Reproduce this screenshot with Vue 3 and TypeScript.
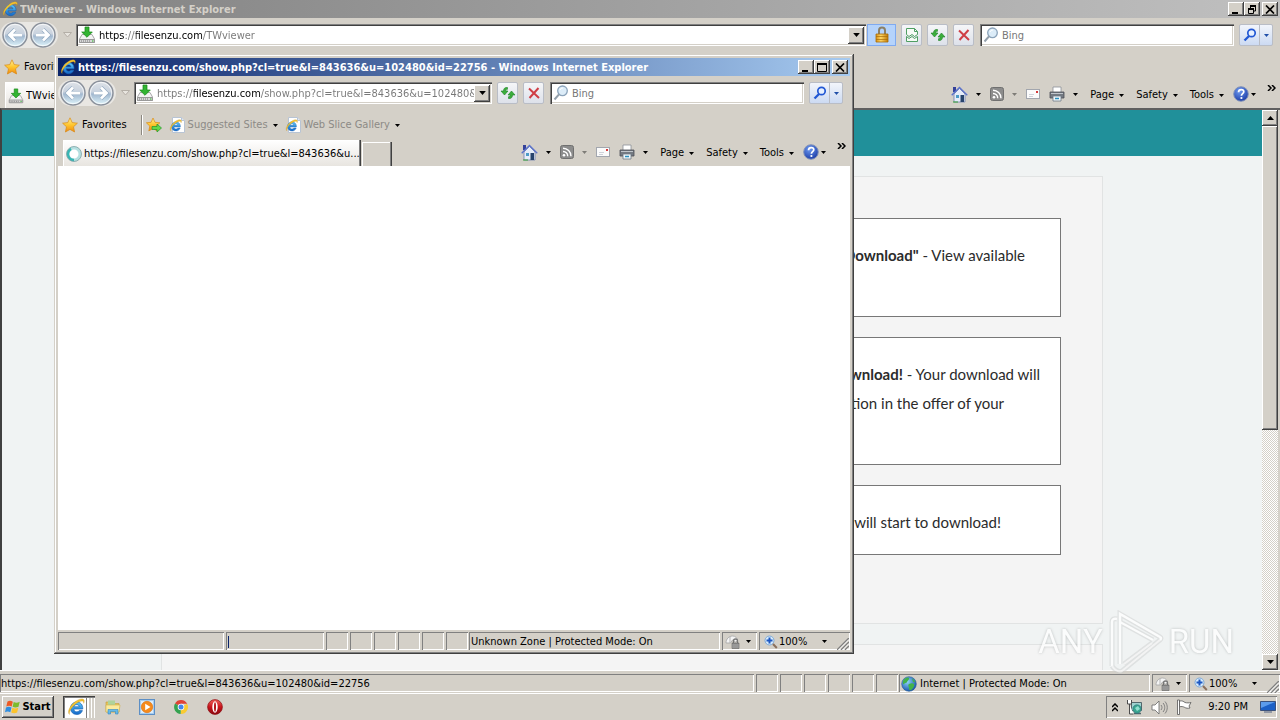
<script setup lang="ts">
interface Tool { icon?: string; label?: string; name: string; arrow?: boolean; dim?: boolean }
interface BrowserWindow {
  id: string
  title: string
  url: string
  tab: string
  zone: string
  known: boolean
  favorites: string[]
  inks: [string, number][]
}

const windows: BrowserWindow[] = [
  {
    id: 'main',
    title: 'TWviewer - Windows Internet Explorer',
    url: 'https://filesenzu.com/TWviewer',
    tab: 'TWviewer',
    zone: 'Internet | Protected Mode: On',
    known: true,
    favorites: [],
    inks: [['#000', 26], ['#777', 37], ['#000', 103], ['#777', 1200]],
  },
  {
    id: 'popup',
    title: 'https://filesenzu.com/show.php?cl=true&l=843636&u=102480&id=22756 - Windows Internet Explorer',
    url: 'https://filesenzu.com/show.php?cl=true&l=843636&u=102480&id=22756',
    tab: 'https://filesenzu.com/show.php?cl=true&l=843636&u...',
    zone: 'Unknown Zone | Protected Mode: On',
    known: false,
    favorites: ['Suggested Sites', 'Web Slice Gallery'],
    inks: [['#777', 37], ['#000', 103], ['#777', 1200]],
  },
]

const tools: Tool[] = [
  { icon: 'home', name: 'Home', arrow: true },
  { icon: 'rss', name: 'Feeds', arrow: true, dim: true },
  { icon: 'mail', name: 'Read mail' },
  { icon: 'printer', name: 'Print', arrow: true },
  { label: 'Page', name: 'Page', arrow: true },
  { label: 'Safety', name: 'Safety', arrow: true },
  { label: 'Tools', name: 'Tools', arrow: true },
]

const steps = [
  { lines: [{ strong: 'Download"', text: ' - View available', end: 35 }], blank: true },
  {
    lines: [
      { strong: 'Download!', text: ' - Your download will', end: 20 },
      { strong: '', text: 'tion in the offer of your', end: 56 },
    ],
    blank: true,
  },
  { lines: [{ strong: '', text: 'will start to download!', end: 59 }], blank: false },
]

const launchers = [
  { icon: 'folder', name: 'Explorer' },
  { icon: 'media', name: 'Media Player' },
  { icon: 'chrome', name: 'Chrome' },
  { icon: 'opera', name: 'Opera' },
]

/* Colours the host name differently from the rest of the address. */
function inkGradient(inks: [string, number][]): string {
  let from = 0
  const stops = inks.map(([color, to]) => {
    const stop = `${color} ${from}px ${to}px`
    from = to
    return stop
  })
  return `linear-gradient(90deg, ${stops.join(', ')})`
}
</script>

<template>
  <div class="desktop">
    <svg class="sprite" width="0" height="0" aria-hidden="true">
      <defs>
        <linearGradient id="g-ball" x1="0" y1="0" x2="0" y2="1">
          <stop offset="0" stop-color="#dfe3e8" /><stop offset=".45" stop-color="#c9d2de" />
          <stop offset=".55" stop-color="#a3b9d0" /><stop offset="1" stop-color="#e0f6fc" />
        </linearGradient>
        <linearGradient id="g-star" x1="0" y1="0" x2="0" y2="1">
          <stop offset="0" stop-color="#fff2a0" /><stop offset=".5" stop-color="#ffc62e" /><stop offset="1" stop-color="#f08a12" />
        </linearGradient>
        <linearGradient id="g-e" x1="0" y1="0" x2="0" y2="1">
          <stop offset="0" stop-color="#5cc8fa" /><stop offset="1" stop-color="#1468c8" />
        </linearGradient>
        <radialGradient id="g-help" cx=".4" cy=".3" r=".8">
          <stop offset="0" stop-color="#6f9bf0" /><stop offset="1" stop-color="#1232a0" />
        </radialGradient>
        <radialGradient id="g-globe" cx=".4" cy=".35" r=".7">
          <stop offset="0" stop-color="#8fd4fa" /><stop offset="1" stop-color="#1050a8" />
        </radialGradient>
        <linearGradient id="g-lock" x1="0" y1="0" x2="1" y2="0">
          <stop offset="0" stop-color="#d99012" /><stop offset=".4" stop-color="#ffd766" /><stop offset="1" stop-color="#c07a08" />
        </linearGradient>
        <linearGradient id="g-opera" x1="0" y1="0" x2="0" y2="1">
          <stop offset="0" stop-color="#f0605c" /><stop offset=".5" stop-color="#c9141c" /><stop offset="1" stop-color="#8a0910" />
        </linearGradient>
      </defs>
      <symbol id="ie" viewBox="0 0 16 16">
        <path d="M14 9.800H6c.2 1.600 1.200 2.500 2.700 2.500 1 0 1.700-.4 2.200-1.100h2.800c-.8 2.300-2.600 3.500-5 3.500-3.200 0-5.500-2.300-5.500-5.500 0-3.200 2.300-5.600 5.500-5.600 3.400 0 5.500 2.500 5.300 6.200zM6 7.800h4.900C10.700 6.500 9.900 5.900 8.500 5.900c-1.300 0-2.200.7-2.500 1.900z" fill="url(#g-e)" stroke="#1761b4" stroke-width=".6" />
        <path d="M2.200 14.600C-.2 12.300 3 6.200 7.600 3.100c3.200-2.300 6.600-3 7.500-1.300.4.800.2 1.800-.3 2.900.1-1.100-.1-1.800-.9-2-1.700-.4-5.200 1.300-7.800 3.900-3.100 3-4.600 6.600-3.900 8z" fill="#f4c432" stroke="#c48b10" stroke-width=".3" />
      </symbol>
      <symbol id="iepage" viewBox="0 0 16 16">
        <path d="M3.500 .5h9l3 3v12h-12z" fill="#fff" stroke="#b8c4d4" />
        <path d="M12.500 .5v3h3" fill="#dfe7f2" stroke="#b8c4d4" />
        <use href="#ie" x="0" y="2" width="13" height="13" />
      </symbol>
      <symbol id="site" viewBox="0 0 18 18">
        <path d="M4 8.500h10l2.500 4.500v3.500h-15V13z" fill="#f3f3f3" stroke="#a9a9a9" />
        <path d="M1.500 13.500h15v3h-15z" fill="#d8d8d8" stroke="#999" />
        <path d="M3 15h9" stroke="#777" stroke-dasharray="1 1" /><path d="M14 15h1.500" stroke="#29b729" />
        <path d="M7 1h4v5h3.300L9 11.300 3.700 6H7z" fill="#32b432" stroke="#148414" stroke-width=".7" />
      </symbol>
      <symbol id="back" viewBox="0 0 26 26">
        <circle cx="13" cy="13" r="12" fill="url(#g-ball)" stroke="#8b919b" stroke-width="1.500" />
        <circle cx="13" cy="13" r="10.700" fill="none" stroke="#fff" stroke-opacity=".75" />
        <path d="M20 13H8M13 7.500L7.500 13l5.500 5.500" fill="none" stroke="#8fa7bf" stroke-width="4" /><path d="M20 13H8M13 7.500L7.500 13l5.500 5.500" fill="none" stroke="#fff" stroke-width="2.800" />
      </symbol>
      <symbol id="forward" viewBox="0 0 26 26">
        <circle cx="13" cy="13" r="12" fill="url(#g-ball)" stroke="#8b919b" stroke-width="1.500" />
        <circle cx="13" cy="13" r="10.700" fill="none" stroke="#fff" stroke-opacity=".75" />
        <path d="M6 13h12M13 7.500l5.500 5.500-5.500 5.500" fill="none" stroke="#8fa7bf" stroke-width="4" /><path d="M6 13h12M13 7.500l5.500 5.500-5.500 5.500" fill="none" stroke="#fff" stroke-width="2.800" />
      </symbol>
      <symbol id="arrow" viewBox="0 0 5 3"><path d="M0 0h5L2.500 3z" fill="currentColor" /></symbol>
      <symbol id="lock" viewBox="0 0 16 18">
        <path d="M5 9V4.500a3 3 0 0 1 6 0V9" fill="none" stroke="#8b8067" stroke-width="2" />
        <path d="M2 8h12v8H2z" fill="url(#g-lock)" stroke="#a86c08" stroke-width=".8" /><path d="M2 10.500h12M2 13.500h12" stroke="#a86c08" stroke-opacity=".7" />
      </symbol>
      <symbol id="broken" viewBox="0 0 14 16">
        <path d="M1.500 7.500V1.500h8l3 3v3l-3 2-2.500-2-3 2z" fill="#f6fbf6" stroke="#4f9f63" />
        <path d="M1.500 14.500v-5l2.500 2 3-2 2.500 2 3-2v5z" fill="#f6fbf6" stroke="#4f9f63" /><path d="M9.500 1.500v3h3" fill="none" stroke="#4f9f63" />
      </symbol>
      <symbol id="refresh" viewBox="0 0 16 16">
        <path d="M7.500 2.500C5 2 3.500 3.500 3.500 6H1l3.500 4L8 6H5.800c0-1.300.5-1.800 1.700-1.700z" fill="#3cae3c" stroke="#1d7f25" stroke-width=".6" />
        <path d="M8.500 13.500c2.500.5 4-1 4-3.500H15l-3.500-4L8 10h2.200c0 1.300-.5 1.800-1.700 1.700z" fill="#3cae3c" stroke="#1d7f25" stroke-width=".6" />
      </symbol>
      <symbol id="stop" viewBox="0 0 12 12"><path d="M1 1.500L11 11M10.500 1L1.500 11" stroke="#cf3f46" stroke-width="2" fill="none" /></symbol>
      <symbol id="lens" viewBox="0 0 16 16">
        <circle cx="9.500" cy="5.800" r="4.800" fill="#dcecf8" stroke="#8ba3ba" stroke-width="1.300" /><path d="M7 5a2.800 2.800 0 0 1 3-2" stroke="#fff" fill="none" />
        <path d="M6 9.300L1.500 14.500" stroke="#93a0ac" stroke-width="2" />
      </symbol>
      <symbol id="go" viewBox="0 0 14 14">
        <circle cx="8.500" cy="5" r="3.700" fill="#e6f0ff" stroke="#2258d4" stroke-width="1.700" /><path d="M6 8L1.500 12.500" stroke="#2258d4" stroke-width="2.300" />
      </symbol>
      <symbol id="star" viewBox="0 0 16 16">
        <path d="M8 .8l2.200 4.800 5.200.6-3.900 3.600 1.100 5.200L8 12.400 3.400 15l1.100-5.200L.6 6.200l5.200-.6z" fill="url(#g-star)" stroke="#d98a14" stroke-width=".7" />
      </symbol>
      <symbol id="staradd" viewBox="0 0 16 16">
        <path d="M7 1l2 4.300 4.900.5-3.700 3.300 1 4.800L7 11.500l-4.200 2.400 1-4.800L.4 5.800l4.700-.5z" fill="url(#g-star)" stroke="#d98a14" stroke-width=".7" />
        <path d="M6 9.500h5V7l4.500 4-4.500 4v-2.500H6z" fill="#63d84b" stroke="#22962a" stroke-width=".7" />
      </symbol>
      <symbol id="spinner" viewBox="0 0 16 16">
        <circle cx="8" cy="8" r="6" fill="#fff" stroke="#b5dfe0" stroke-width="3" />
        <path d="M5 2.800a6 6 0 0 0 3 11.200" fill="none" stroke="#37b6b4" stroke-width="2.500" /><circle cx="8" cy="8" r="7.500" fill="none" stroke="#7ea2a5" stroke-width=".8" />
      </symbol>
      <symbol id="home" viewBox="0 0 17 17">
        <path d="M2 1h3v5H2z" fill="#34419a" /><path d="M3 8v8h11V8L8.500 2.500z" fill="#e6edf9" stroke="#7181ad" stroke-width=".8" />
        <path d="M.7 9.200L8.500 1.500l7.800 7.700" fill="none" stroke="#5b72cc" stroke-width="1.300" />
        <path d="M5 9h3v3H5z" fill="#4d9bc7" /><path d="M9.500 9H13v7H9.500z" fill="#28446d" /><path d="M2 16h5" stroke="#36a236" />
      </symbol>
      <symbol id="rss" viewBox="0 0 14 14">
        <rect x=".5" y=".5" width="13" height="13" rx="2" fill="#8c8c8c" stroke="#707070" />
        <circle cx="4" cy="10.200" r="1.300" fill="#fff" /><path d="M3 6.500a4.500 4.500 0 0 1 4.700 4.700M3 3.200a8 8 0 0 1 8 8" fill="none" stroke="#fff" stroke-width="1.400" />
      </symbol>
      <symbol id="mail" viewBox="0 0 14 10">
        <rect x=".5" y=".5" width="13" height="9" fill="#fbfbfb" stroke="#a2a6ae" /><rect x="10" y="2" width="2" height="2" fill="#d53a3a" />
        <path d="M3 5.500h5M3 7.500h4" stroke="#cfd2da" />
      </symbol>
      <symbol id="printer" viewBox="0 0 16 16">
        <path d="M4 1h8v6H4z" fill="#fff" stroke="#8a8f98" stroke-width=".8" /><path d="M1 6h14v6H1z" fill="#747a82" stroke="#4b4f55" stroke-width=".8" />
        <path d="M2 7.500h12" stroke="#c0c5cb" /><path d="M4 10h8v5H4z" fill="#eef7fb" stroke="#6f7a86" stroke-width=".8" /><path d="M6 12.500h4" stroke="#2b8fbd" stroke-width="1.500" />
      </symbol>
      <symbol id="help" viewBox="0 0 16 16">
        <circle cx="8" cy="8" r="7.300" fill="url(#g-help)" stroke="#8494b8" />
        <path d="M5.500 6.200C5.600 4.500 6.700 3.600 8.200 3.600c1.600 0 2.600.9 2.600 2.200 0 1.900-2.400 1.900-2.400 3.900" fill="none" stroke="#fff" stroke-width="1.700" /><circle cx="8.400" cy="12" r="1.100" fill="#fff" />
      </symbol>
      <symbol id="secure" viewBox="0 0 18 16">
        <path d="M2 9c0-4 3-7 6.500-7 3 0 5 2 5 5l-2 1-3-2-2 3z" fill="#f4f4f4" stroke="#a5a5a5" stroke-width=".8" /><path d="M6 3v6" stroke="#b5b5b5" />
        <path d="M9.500 9V7a2 2 0 0 1 4 0v2" fill="none" stroke="#777" stroke-width="1.300" /><path d="M8 9h7v5.500H8z" fill="#8a8a8a" stroke="#666" stroke-width=".6" /><path d="M8 11h7M8 13h7" stroke="#bbb" stroke-width=".6" />
      </symbol>
      <symbol id="zoomin" viewBox="0 0 14 14">
        <circle cx="5.500" cy="5.500" r="4.500" fill="#d6eafb" stroke="#7fa9d6" /><path d="M5.500 2.500v6M2.500 5.500h6" stroke="#1d57c2" stroke-width="2" /><path d="M9 9l3.800 4" stroke="#8a6f5c" stroke-width="2" />
      </symbol>
      <symbol id="globe" viewBox="0 0 16 16">
        <circle cx="8" cy="8" r="7.300" fill="url(#g-globe)" stroke="#285a92" stroke-width=".6" />
        <path d="M2 5c1-2 3-3.500 5-3.500 2 .5 1 2 0 3S6 7 4.500 7 3 9 2 8zM8 8c2-1 4-1 5 0s-1 5-3 6-2-1-2-2-1.500-3 0-4zM11 2.500c2 1 3 2.500 3.300 4L12 6z" fill="#42b24a" />
      </symbol>
      <symbol id="flagwin" viewBox="0 0 16 16">
        <path d="M2.500 2.500C4.500 1.400 6 1.600 7.800 2.700L6.700 7.500C5 6.500 3.500 6.400 1.300 7.400z" fill="#ee5a24" /><path d="M8.700 3c2 1 3.700.9 6-.2l-1.200 4.900c-2 1-3.800 1.100-5.900.1z" fill="#7dbb2b" />
        <path d="M1 8.400c2-1 3.700-.9 5.500.1l-1.200 4.700C3.500 12.200 2 12.200 0 13.200z" fill="#2f8ee0" /><path d="M7.400 8.800c2 1 3.700.9 5.900-.1l-1.200 4.800c-2 1-3.800 1-5.900 0z" fill="#fcc42c" />
      </symbol>
      <symbol id="folder" viewBox="0 0 16 16">
        <path d="M1 3h5l1.500 1.500H14V13H1z" fill="#e6c45c" stroke="#c39c38" stroke-width=".6" /><path d="M3 1.500h7V6H3z" fill="#aed39b" /><path d="M1 6h14l-1 7H1z" fill="#faea9d" stroke="#d2b24e" stroke-width=".6" />
        <path d="M3 15v-4.500h10V15h-2.500v-2.500h-5V15z" fill="#65b9e8" stroke="#3487bf" stroke-width=".6" />
      </symbol>
      <symbol id="media" viewBox="0 0 16 16">
        <rect x=".5" y=".5" width="15" height="15" fill="#a5cdf1" stroke="#5d8fc5" /><path d="M2 2h12v12H2z" fill="#dcecf9" /><circle cx="8" cy="8" r="5.700" fill="#f58a1c" stroke="#d86c08" stroke-width=".6" /><path d="M6.200 4.800L11.500 8l-5.300 3.200z" fill="#fff" />
      </symbol>
      <symbol id="chrome" viewBox="0 0 16 16">
        <path d="M8 8L2 4.500A7 7 0 0 1 14.200 4.800H8z" fill="#df4236" /><path d="M8 8l6.200-3.200A7 7 0 0 1 7.600 15z" fill="#f9cb32" /><path d="M8 8l-.4 7A7 7 0 0 1 2 4.500z" fill="#35a250" />
        <circle cx="8" cy="8" r="3.300" fill="#fff" /><circle cx="8" cy="8" r="2.500" fill="#4386ec" />
      </symbol>
      <symbol id="opera" viewBox="0 0 16 16">
        <circle cx="8" cy="8" r="7.400" fill="url(#g-opera)" stroke="#8d0b10" stroke-width=".7" /><ellipse cx="8" cy="8" rx="2.700" ry="5.700" fill="#fff" /><ellipse cx="8" cy="8" rx="1" ry="4.800" fill="#b3141a" />
      </symbol>
      <symbol id="network" viewBox="0 0 17 17">
        <path d="M5.500 3.500h10v8h-10z" fill="#9fd2cf" stroke="#52676c" /><path d="M8 14.500h7" stroke="#52676c" stroke-width="1.500" /><circle cx="11" cy="10" r="4.200" fill="#3aa58f" stroke="#2a6f7a" stroke-width=".6" /><path d="M9 9l3-2 2 3-3 2z" fill="#91dfd0" />
        <path d="M1.500 1v4h4V1M3.500 5v10h4" fill="#fff" stroke="#4c4c4c" />
      </symbol>
      <symbol id="speaker" viewBox="0 0 17 15">
        <path d="M1 5h3l4-4v13l-4-4H1z" fill="#fff" stroke="#666" stroke-width=".8" /><path d="M10 5c1.300 1.500 1.300 3.500 0 5M12 3c2.300 2.500 2.300 6.500 0 9M14 1.500c3 3.500 3 8.500 0 12" fill="none" stroke="#777" stroke-width=".9" />
      </symbol>
      <symbol id="flag" viewBox="0 0 16 16">
        <path d="M1.500 1h2v14.500h-2z" fill="#fff" stroke="#555" stroke-width=".8" /><path d="M3.500 2c3-.5 4 .5 5.500 1.500 2 .5 4 .5 6 0l-2 3.500 1 2c-2 .5-4 .3-5.500-.7-1.500-.8-3-1-5-.5z" fill="#fff" stroke="#555" stroke-width=".8" />
      </symbol>
      <symbol id="monitor" viewBox="0 0 16 14">
        <path d="M.5 1.500h15v9H.5z" fill="#1c60c6" stroke="#20345e" stroke-width=".7" /><path d="M1 2h14L1 8z" fill="#5c9cec" /><path d="M4 12h8" stroke="#7c8698" stroke-width="1.500" />
      </symbol>
    </svg>

    <section v-for="w in windows" :key="w.id" class="window" :class="w.id" :aria-label="w.title">
      <header class="titlebar">
        <svg class="i16"><use href="#ie" /></svg>
        <h1>{{ w.title }}</h1>
        <div class="caption-buttons">
          <button class="bevel" aria-label="Minimize"><svg width="10" height="9"><path d="M1 7h6v2H1z" /></svg></button>
          <button class="bevel" :aria-label="w.known ? 'Restore' : 'Maximize'">
            <svg v-if="w.known" width="10" height="9"><path d="M3.500 3V.500h5V6H6" fill="none" stroke="#000" /><path d="M3 1h6M1 4h6" stroke="#000" stroke-width="2" /><path d="M1.500 3.500h5v5h-5z" fill="none" stroke="#000" /></svg>
            <svg v-else width="10" height="9"><path d="M.5.500h9v8h-9z" fill="none" stroke="#000" /><path d="M0 1h10" stroke="#000" stroke-width="2" /></svg>
          </button>
          <button class="bevel close" aria-label="Close"><svg width="10" height="9"><path d="M1 .5l8 8M9 .5l-8 8" stroke="#000" stroke-width="1.700" /></svg></button>
        </div>
      </header>

      <nav class="navrow" aria-label="Navigation">
        <div class="history">
          <button aria-label="Back"><svg><use href="#back" /></svg></button>
          <button aria-label="Forward"><svg><use href="#forward" /></svg></button>
        </div>
        <button class="recent" aria-label="Recent pages"><svg width="9" height="6"><path d="M.5.500h8L4.500 5z" fill="#e8e5df" stroke="#b4afa7" /></svg></button>
        <div class="address sunken">
          <svg><use href="#site" /></svg>
          <input type="text" aria-label="Address" :value="w.url" :style="{ backgroundImage: inkGradient(w.inks) }" />
          <button class="bevel drop" aria-label="Show addresses"><svg class="arrow wide"><use href="#arrow" /></svg></button>
        </div>
        <button v-if="w.known" class="lockbtn" aria-label="Security report"><svg width="16" height="18"><use href="#lock" /></svg></button>
        <div class="actions">
          <button v-if="w.known" class="glass" aria-label="Compatibility view"><svg width="14" height="16"><use href="#broken" /></svg></button>
          <button class="glass" aria-label="Refresh"><svg width="16" height="16"><use href="#refresh" /></svg></button>
          <button class="glass" aria-label="Stop"><svg width="12" height="12"><use href="#stop" /></svg></button>
        </div>
        <div class="search sunken">
          <svg class="i16"><use href="#lens" /></svg>
          <input type="text" aria-label="Search" placeholder="Bing" />
        </div>
        <div class="gogroup">
          <button class="glass" aria-label="Search the web"><svg width="14" height="14"><use href="#go" /></svg></button>
          <button class="glass more" aria-label="Search options"><svg class="arrow"><use href="#arrow" /></svg></button>
        </div>
      </nav>

      <div class="favrow">
        <button class="favbtn"><svg class="i16"><use href="#star" /></svg>Favorites</button>
        <button v-if="w.favorites.length" class="addfav" aria-label="Add to favorites bar"><svg class="i16"><use href="#staradd" /></svg></button>
        <button v-for="f in w.favorites" :key="f" class="faded"><svg class="i16"><use href="#iepage" /></svg>{{ f }}<svg class="arrow"><use href="#arrow" /></svg></button>
      </div>

      <div class="tabrow">
        <button class="tab"><svg class="i16"><use :href="w.known ? '#site' : '#spinner'" /></svg><span>{{ w.tab }}</span></button>
        <button class="newtab" aria-label="New tab"></button>
        <div class="tools">
          <button v-for="t in tools" :key="t.name" :class="{ text: t.label }" :aria-label="t.name">
            <svg v-if="t.icon" :class="t.icon"><use :href="'#' + t.icon" /></svg>{{ t.label }}
            <svg v-if="t.arrow" class="arrow" :class="{ dim: t.dim }"><use href="#arrow" /></svg>
          </button>
          <button class="helpbtn" aria-label="Help"><svg class="i16"><use href="#help" /></svg><svg class="arrow"><use href="#arrow" /></svg></button>
          <button class="overflow" aria-label="More commands"><svg width="9" height="6"><path d="M1 0l3 3-3 3M5 0l3 3-3 3" fill="none" stroke="#000" stroke-width="1.500" /></svg></button>
        </div>
      </div>

      <div class="viewport">
        <template v-if="w.known">
          <main class="page">
            <div class="banner"></div>
            <div class="panel">
              <article v-for="(s, n) in steps" :key="n" class="step">
                <p v-for="l in s.lines" :key="l.text" :style="{ paddingRight: l.end + 'px' }"><strong>{{ l.strong }}</strong>{{ l.text }}</p>
                <p v-if="s.blank">&nbsp;</p>
              </article>
            </div>
            <div class="panel next"></div>
          </main>
          <div class="scrollbar">
            <button class="bevel" aria-label="Scroll up"><svg width="7" height="4"><path d="M0 4h7L3.500 0z" /></svg></button>
            <div class="thumb bevel"></div>
            <div class="track"></div>
            <button class="bevel" aria-label="Scroll down"><svg width="7" height="4"><path d="M0 0h7L3.500 4z" /></svg></button>
          </div>
        </template>
      </div>

      <footer class="status">
        <div class="pane message">{{ w.known ? 'https://filesenzu.com/show.php?cl=true&l=843636&u=102480&id=22756' : '' }}</div>
        <div v-if="!w.known" class="pane progress"><i></i></div>
        <div v-for="n in 5" :key="n" class="pane slot"></div>
        <div class="pane slot last"></div>
        <div class="pane zone"><svg v-if="w.known" class="i16"><use href="#globe" /></svg>{{ w.zone }}</div>
        <button class="pane secure" aria-label="Protected mode"><svg width="18" height="16"><use href="#secure" /></svg><svg class="arrow"><use href="#arrow" /></svg></button>
        <button class="pane zoom"><svg width="14" height="14"><use href="#zoomin" /></svg>100%<svg class="arrow"><use href="#arrow" /></svg></button>
        <svg class="grip" width="12" height="12"><path d="M0 12L12 0M4 12l8-8M8 12l4-4" stroke="#808080" stroke-width="1.500" /><path d="M1.500 12L12 1.500M5.500 12L12 5.500M9.500 12L12 9.500" stroke="#fff" /></svg>
      </footer>
    </section>

    <div class="watermark" aria-label="ANY RUN">
      <span>ANY</span>
      <svg width="60" height="64" viewBox="0 0 60 64">
        <path d="M6 56V12q0-4 5-3M14 54V4l40 23q2 1 0 3L16 61q-5 2-10-5M14 12l33 18M18 54l28-21" fill="none" stroke="#c9cccc" stroke-width="5" stroke-opacity=".6" />
        <path d="M6 56V12q0-4 5-3M14 54V4l40 23q2 1 0 3" fill="none" stroke="#fff" stroke-width="2.500" /><path d="M14 12l33 18" stroke="#fff" stroke-width="2" />
        <path d="M54 30L16 61q-5 2-10-5M18 54l28-21" fill="none" stroke="#f4f4f4" stroke-width="2" />
      </svg>
      <span>RUN</span>
    </div>

    <footer class="taskbar">
      <button class="start bevel"><svg class="i16"><use href="#flagwin" /></svg>Start</button>
      <button class="running" aria-label="Internet Explorer"><svg width="18" height="18"><use href="#ie" /></svg></button>
      <div class="launchers">
        <button v-for="l in launchers" :key="l.name" :aria-label="l.name"><svg class="i16"><use :href="'#' + l.icon" /></svg></button>
      </div>
      <div class="tray">
        <button aria-label="Show hidden icons"><svg width="6" height="9"><path d="M0 4l3-3 3 3M0 8l3-3 3 3" fill="none" stroke="#000" stroke-width="1.500" /></svg></button>
        <svg width="17" height="17"><use href="#network" /></svg>
        <svg width="17" height="15"><use href="#speaker" /></svg>
        <svg width="16" height="16"><use href="#flag" /></svg>
        <time>9:20 PM</time>
        <button aria-label="Show desktop"><svg width="16" height="14"><use href="#monitor" /></svg></button>
      </div>
    </footer>
  </div>
</template>

<style>
body { margin: 0; overflow: hidden; }
</style>

<style scoped>
.desktop { --face: #d4d0c8; position: relative; display: flex; flex-direction: column; height: 100vh; background: var(--face); color: #000; font: 11px/14px "DejaVu Sans Condensed", Tahoma, sans-serif; }
.sprite { position: absolute; }
svg { flex: none; display: block; }
button { display: flex; align-items: center; margin: 0; padding: 0; border: 0; background: none; color: inherit; font: inherit; white-space: nowrap; }
input { min-width: 0; margin: 0; padding: 2px 0 0; border: 0; outline: 0; font: inherit; }
.i16 { width: 16px; height: 16px; }
.arrow { width: 5px; height: 3px; }
.arrow.wide { width: 7px; height: 4px; }
.arrow.dim { opacity: .4; }
.bevel { justify-content: center; background: var(--face); box-shadow: inset -1px -1px #404040, inset 1px 1px #fff, inset -2px -2px #808080; }
.sunken { background: #fff; box-shadow: inset 1px 1px #808080, inset 2px 2px #404040, inset -1px -1px #fff, inset -2px -2px var(--face); }

.window { display: flex; flex-direction: column; min-height: 0; background: var(--face); }
.main { flex: 1; }
.popup { position: absolute; left: 54px; top: 54px; box-sizing: border-box; width: 800px; height: 600px; padding: 4px; box-shadow: inset -1px -1px #404040, inset 1px 1px var(--face), inset -2px -2px #808080, inset 2px 2px #fff; }

.titlebar { display: flex; align-items: center; gap: 2px; height: 18px; padding: 0 2px; color: #d4d0c8; background: linear-gradient(90deg, #808080, #c0c0c0); }
.popup .titlebar { color: #fff; background: linear-gradient(90deg, #0a246a, #a6caf0); }
h1 { flex: 1; margin: 0; padding-top: 2px; overflow: hidden; font: inherit; font-weight: 700; white-space: nowrap; }
.caption-buttons { display: flex; }
.caption-buttons button { width: 16px; height: 14px; }
.caption-buttons .close { margin-left: 2px; }

.navrow { display: flex; align-items: center; height: 34px; padding-right: 7px; }
.history { display: flex; gap: 2px; padding: 0 2px; border-radius: 14px; background: #e9e7e3; }
.history svg { width: 26px; height: 26px; }
.recent { justify-content: center; width: 18px; height: 20px; }
.address { display: flex; align-items: center; flex: 1; height: 22px; padding: 0 2px; min-width: 0; }
.address > svg { width: 18px; height: 18px; }
.address input { flex: 1; margin-left: 3px; color: transparent; background-clip: text; -webkit-background-clip: text; }
.drop { width: 16px; height: 17px; }
.lockbtn { justify-content: center; width: 29px; height: 22px; margin-left: 1px; background: #b5d3fb; box-shadow: inset 0 0 0 1px #7faaf0; }
.actions { display: flex; gap: 5px; margin: 0 6px 0 5px; }
.glass { justify-content: center; width: 21px; height: 22px; border: 1px solid #b9bdc6; border-radius: 2px; background: linear-gradient(#f5f6f8, #dde1ea); }
.search { display: flex; align-items: center; gap: 3px; width: 248px; height: 22px; padding: 0 3px; }
.search input { flex: 1; background: none; }
.search input::placeholder { color: #777; opacity: 1; }
.gogroup { display: flex; margin-left: 5px; }
.gogroup .glass { border-radius: 2px 0 0 2px; background: linear-gradient(#f2f5fb, #ccdaf2); }
.gogroup .more { width: 14px; margin-left: -1px; border-radius: 0 2px 2px 0; color: #1f4ea8; }

.favrow { display: flex; align-items: center; gap: 7px; height: 30px; padding-left: 4px; }
.favrow button { gap: 3px; }
.favrow .favbtn { gap: 4px; }
.favrow .addfav { height: 20px; margin-left: 7px; padding-left: 4px; border-left: 1px solid #8c8880; box-shadow: inset 1px 0 #fff; }
.favrow .faded { color: #8c8a86; }
.favrow .arrow { color: #000; margin-left: 2px; }

.tabrow { display: flex; align-items: flex-end; height: 26px; padding-left: 5px; }
.tab { gap: 2px; box-sizing: border-box; width: 298px; height: 26px; padding: 2px 2px 0 3px; background: linear-gradient(#fff, #e8e5e0); box-shadow: inset -1px 0 #404040, inset -2px 0 #808080, inset 1px 1px #fff; }
.tab span { overflow: hidden; }
.newtab { width: 30px; height: 24px; margin-left: 1px; box-shadow: inset -1px 0 #404040, inset -2px 0 #808080, inset 1px 1px #fff; }
.tools { display: flex; align-items: center; gap: 9px; height: 24px; margin-left: auto; padding-right: 4px; align-self: flex-start; }
.tools button { gap: 8px; }
.tools .text { gap: 5px; padding: 2px 0 0 3px; }
.home { width: 17px; height: 17px; }
.rss { width: 14px; height: 14px; }
.mail { width: 14px; height: 10px; }
.printer { width: 16px; height: 16px; }
.tools .helpbtn { gap: 2px; }
.tools .overflow { align-self: flex-start; height: 12px; margin-left: 2px; }

.viewport { display: flex; flex: 1; min-height: 0; background: #fff; }
.main .viewport { border: solid #404040; border-width: 2px 0 0 2px; border-top-color: #606060; padding-right: 2px; background: var(--face); overflow: hidden; }
.page { flex: 1; height: 100%; overflow: hidden; background: #f0f3f3; }
.banner { height: 46px; background: #20909a; }
.panel { box-sizing: border-box; max-width: 942px; margin: 20px auto; padding: 41px; border: 1px solid #e1e3e3; background: #f4f4f4; }
.panel:not(.next) { height: 448px; }
.step { margin-bottom: 20px; padding: 22px 0 17px; border: 1px solid #777; background: #fff; color: #2b2b2b; font: 15px/29px Lato, sans-serif; text-align: right; }
.step p { margin: 0; }
.scrollbar { display: flex; flex-direction: column; width: 16px; background: repeating-conic-gradient(#fff 0 25%, #d4d0c8 0 50%) 0 0 / 2px 2px; }
.scrollbar button { height: 16px; }
.thumb { flex: 304; }
.track { flex: 224; }

.status { display: flex; gap: 2px; position: relative; height: 18px; padding: 2px 0 0; }
.main .status { padding: 3px 0 1px; border-top: 1px solid #fff; }
.pane { display: flex; align-items: center; box-sizing: border-box; height: 18px; padding-top: 1px; box-shadow: inset 1px 1px #808080, inset -1px -1px #fff; }
.message { flex: 1; padding-left: 1px; white-space: nowrap; }
.progress { width: 98px; padding-left: 2px; }
.progress i { width: 1px; height: 12px; background: #0a246a; }
.slot { width: 22px; }
.last { margin-right: -1px; }
.zone { width: 251px; padding-left: 2px; gap: 3px; }
.secure { width: 35px; gap: 4px; padding-left: 2px; }
.zoom { width: 91px; padding-left: 5px; gap: 1px; }
.zoom .arrow { margin-left: 14px; }
.grip { position: absolute; right: 1px; bottom: 0; }

.watermark { position: absolute; right: 46px; bottom: 46px; display: flex; align-items: center; gap: 3px; color: #fff; font: 33px/44px Roboto, sans-serif; text-shadow: 0 0 3px #a8acac; opacity: .75; }

.taskbar { display: flex; align-items: center; height: 26px; padding: 0 3px 0 2px; border-top: 1px solid #fff; }
.start { gap: 1px; width: 52px; height: 22px; font-weight: 700; }
.running { width: 32px; height: 22px; margin-left: 9px; padding-left: 4px; box-sizing: border-box; background: linear-gradient(90deg, #fff 23px, #808080 23px 24px, #fff 24px 26px, #d4d0c8 26px 28px, #fff 28px 29px, #d4d0c8 29px 31px, #fff 31px); box-shadow: inset 1px 1px #404040, inset 2px 2px #808080; }
.launchers { display: flex; gap: 18px; margin-left: 10px; }
.tray { display: flex; align-items: center; gap: 8px; box-sizing: border-box; height: 22px; margin-left: auto; padding: 0 1px 0 6px; box-shadow: inset 1px 1px #808080, inset -1px -1px #fff; }
.tray time { margin: 0 4px 0 8px; }
</style>
